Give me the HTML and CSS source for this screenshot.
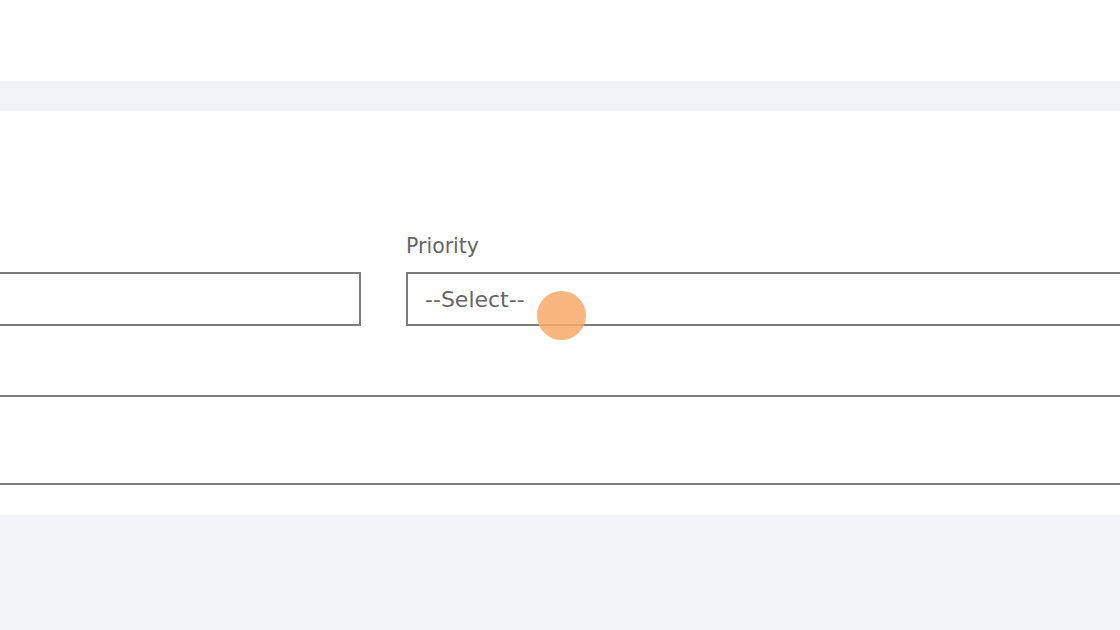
FILE: index.html
```html
<!DOCTYPE html>
<html lang="en">
<head>
    <meta charset="UTF-8">
    <meta name="viewport" content="width=device-width, initial-scale=1.0">
    <title>New Ticket</title>
    <link rel="stylesheet" href="styles.css">
</head>
<body>

    <!-- top header area -->
    <div class="header"></div>
    <div class="band"></div>

    <!-- ticket form -->
    <form class="form">
        <div class="row">
            <div class="field">
                <label class="label">&nbsp;</label>
                <input class="input" type="text">
            </div>
            <div class="field">
                <label class="label">Priority</label>
                <div class="select">
                    <span>--Select--</span>
                    <span class="cursor"></span>
                </div>
            </div>
        </div>
        <textarea class="notes"></textarea>
    </form>

    <div class="footer"></div>

</body>
</html>
```
FILE: styles.css
```css
body { margin: 0; overflow: hidden; font-family: "DejaVu Sans", Verdana, sans-serif; color: #666; background: #fff; }
.header { height: 81px; }
.band { height: 30px; background-color: #f2f3f7; }
.form { padding: 123px 0 30px; margin: 0 -20px; }
.row { display: grid; grid-template-columns: 381px 1fr; gap: 45px; }
.field { display: flex; flex-direction: column; }
.label { font-size: 20.5px; line-height: 24px; height: 24px; margin-bottom: 14px; }
.input, .select { box-sizing: border-box; height: 54px; border: 2px solid #7c7c7c; background: #fff; margin: 0; }
.select { position: relative; display: flex; align-items: center; padding: 0 17px; font-size: 22px; color: #666; margin-right: -40px; }
.cursor { position: absolute; left: 129px; top: 17px; width: 49px; height: 49px; border-radius: 50%; background-color: rgba(248, 170, 105, 0.85); }
.notes { display: block; box-sizing: border-box; width: 100%; height: 90px; margin-top: 69px; border: 2px solid #7c7c7c; resize: none; }
.footer { height: 200px; background-color: #f2f3f7; }
```
